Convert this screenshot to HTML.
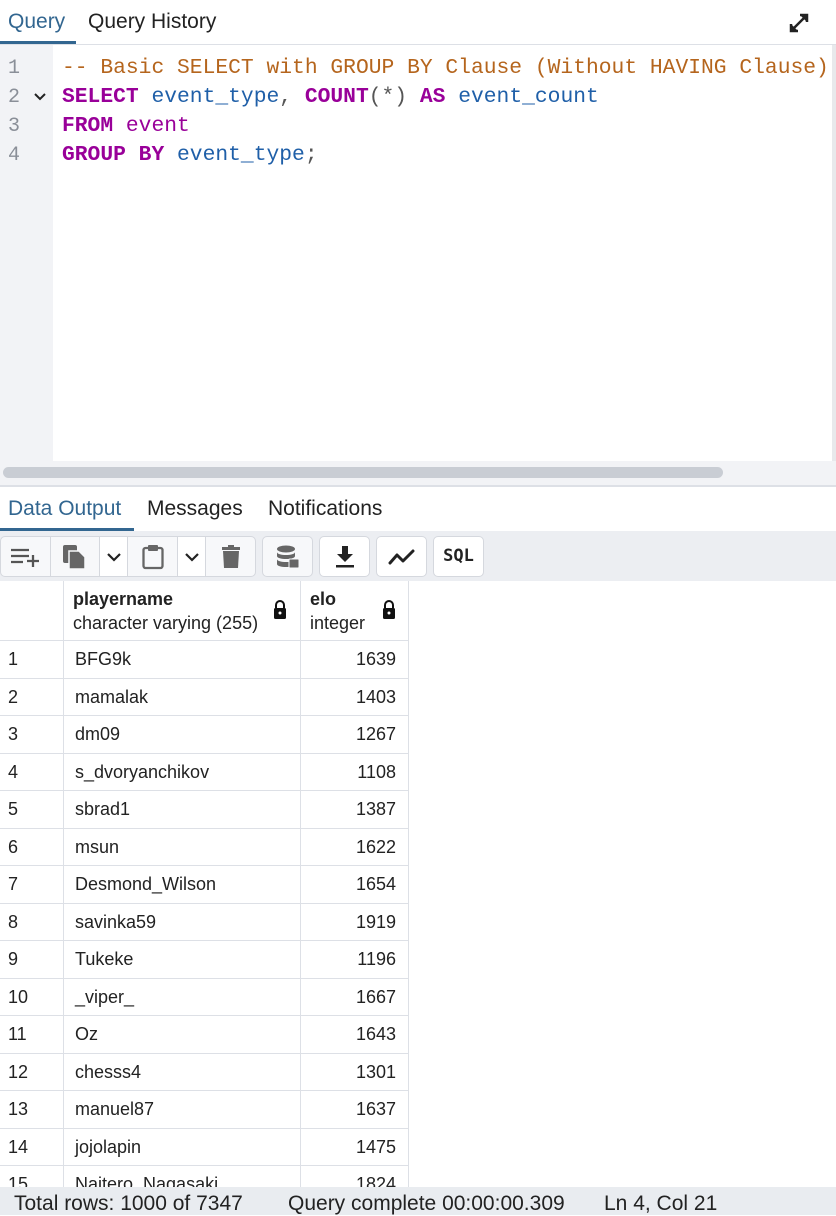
<!DOCTYPE html>
<html><head><meta charset="utf-8"><style>
*{box-sizing:border-box;margin:0;padding:0}
body{width:836px;height:1215px;overflow:hidden;background:#fff;font-family:"Liberation Sans",sans-serif;position:relative;color:#222}
.abs{position:absolute}
.tab{position:absolute;font-size:21px;top:10px;color:#222}
.code{font-family:"Liberation Mono",monospace;font-size:21.3px;position:absolute;left:62px;white-space:pre;line-height:29px}
.ln{position:absolute;left:8px;font-family:"Liberation Mono",monospace;font-size:20px;color:#8a8f98;line-height:29px}
.k{color:#990099;font-weight:bold}.v{color:#1f5fa8}.c{color:#b5651d}.p{color:#555}
.btn{position:absolute;top:536px;height:41px;border:1px solid #d5d8de;border-radius:5px;background:#f7f8fa}
.row{position:absolute;left:0;width:409px;height:37.5px;border-bottom:1px solid #dde0e6;font-size:18px}
.row span{position:absolute;top:8px}
.st{position:absolute;top:1192px;font-size:21px;color:#222;white-space:nowrap}
</style></head><body>
<div class="tab" style="left:8px;color:#326690">Query</div>
<div class="tab" style="left:88px">Query History</div>
<div class="abs" style="left:0;top:41px;width:76px;height:3px;background:#326690"></div>
<div class="abs" style="left:0;top:44px;width:836px;height:1px;background:#dde0e6"></div>
<svg class="abs" style="left:788px;top:12px" width="22" height="22" viewBox="0 0 22 22"><path d="M3 19L19 3M12 3h7v7M3 12v7h7" stroke="#222" stroke-width="2.5" fill="none"/><path d="M12 3h7v7zM3 12v7h7z" fill="#222"/></svg>
<div class="abs" style="left:0;top:45px;width:53px;height:416px;background:#f2f3f6"></div>
<div class="abs" style="left:832px;top:45px;width:4px;height:440px;background:#e8e9ec"></div>
<div class="ln" style="top:54px">1<br>2<br>3<br>4</div>
<svg class="abs" style="left:34px;top:93px" width="12" height="8"><path d="M1 1l5 5 5-5" stroke="#222" stroke-width="2" fill="none"/></svg>
<div class="code" style="top:54px"><span class="c">-- Basic SELECT with GROUP BY Clause (Without HAVING Clause)</span>
<span class="k">SELECT</span> <span class="v">event_type</span><span class="p">,</span> <span class="k">COUNT</span><span class="p">(*)</span> <span class="k">AS</span> <span class="v">event_count</span>
<span class="k">FROM</span> <span class="k" style="font-weight:normal;color:#990099">event</span>
<span class="k">GROUP BY</span> <span class="v">event_type</span><span class="p">;</span></div>
<div class="abs" style="left:0;top:461px;width:836px;height:24px;background:#f2f3f6"></div>
<div class="abs" style="left:3px;top:467px;width:720px;height:11px;border-radius:6px;background:#c9cdd4"></div>
<div class="abs" style="left:0;top:485px;width:836px;height:2px;background:#dde0e6"></div>
<div class="tab" style="left:8px;top:497px;color:#326690">Data Output</div>
<div class="tab" style="left:147px;top:497px">Messages</div>
<div class="tab" style="left:268px;top:497px">Notifications</div>
<div class="abs" style="left:0;top:528px;width:134px;height:3px;background:#326690"></div>
<div class="abs" style="left:0;top:531px;width:836px;height:50px;background:#eceef2"></div>
<div class="btn" style="left:0;width:256px;overflow:hidden">
 <div class="abs" style="left:49px;top:0;width:1px;height:41px;background:#d5d8de"></div>
 <div class="abs" style="left:98px;top:0;width:29px;height:41px;background:#fff;border-left:1px solid #d5d8de;border-right:1px solid #d5d8de"><svg class="abs" style="left:7px;top:16px" width="14" height="9"><path d="M1 1l6 6 6-6" stroke="#222" stroke-width="2.2" fill="none"/></svg></div>
 <div class="abs" style="left:176px;top:0;width:29px;height:41px;background:#fff;border-left:1px solid #d5d8de;border-right:1px solid #d5d8de"><svg class="abs" style="left:7px;top:16px" width="14" height="9"><path d="M1 1l6 6 6-6" stroke="#222" stroke-width="2.2" fill="none"/></svg></div>
 <svg class="abs" style="left:10px;top:10px" width="30" height="20"><path d="M0 3h18M0 9h18M0 15h12M16 14h12M22 8v12" stroke="#555" stroke-width="2.3"/></svg>
 <svg class="abs" style="left:61px;top:7px" width="24" height="26"><rect x="1" y="1" width="14" height="18" rx="2" fill="#666"/><path d="M7 7h10l6 6v12H7z" fill="#666" stroke="#f7f8fa" stroke-width="1.5"/></svg>
 <svg class="abs" style="left:141px;top:7px" width="22" height="26"><rect x="1.5" y="4" width="19" height="20" rx="2" fill="none" stroke="#666" stroke-width="2.3"/><rect x="6" y="1" width="10" height="6" rx="1" fill="#666"/></svg>
 <svg class="abs" style="left:221px;top:8px" width="18" height="24"><rect x="0" y="2" width="18" height="3" fill="#666"/><rect x="6" y="0" width="6" height="3" fill="#666"/><path d="M1 6h16l-1 17H2z" fill="#666"/></svg>
</div>
<div class="btn" style="left:262px;width:51px"><svg class="abs" style="left:13px;top:8px" width="24" height="24"><ellipse cx="10" cy="4" rx="9" ry="3.5" fill="#666"/><path d="M1 7c0 4 18 4 18 0v4c0 4-18 4-18 0zM1 14c0 4 18 4 18 0v5c0 4-18 4-18 0z" fill="#666"/><rect x="13" y="14" width="10" height="9" rx="1" fill="#666" stroke="#f7f8fa"/></svg></div>
<div class="btn" style="left:319px;width:51px;background:#fff"><svg class="abs" style="left:14px;top:8px" width="22" height="24"><path d="M8 1h6v8h5l-8 8-8-8h5z" fill="#222"/><rect x="2" y="20" width="18" height="2.5" fill="#222"/></svg></div>
<div class="btn" style="left:376px;width:51px;background:#fff"><svg class="abs" style="left:11px;top:10px" width="28" height="20"><path d="M2 16l7-8 6 6 10-10" stroke="#222" stroke-width="3" fill="none" stroke-linejoin="round" stroke-linecap="round"/></svg></div>
<div class="btn" style="left:433px;width:51px;background:#fff;font-family:'DejaVu Sans Mono',monospace;font-weight:bold;font-size:17px;text-align:center;line-height:39px;color:#222">SQL</div>
<div class="abs" style="left:0;top:581px;width:409px;height:60px;border-bottom:1px solid #dde0e6;border-right:1px solid #dde0e6"></div>
<div class="abs" style="left:63px;top:581px;width:1px;height:606px;background:#dde0e6"></div>
<div class="abs" style="left:300px;top:581px;width:1px;height:606px;background:#dde0e6"></div>
<div class="abs" style="left:408px;top:581px;width:1px;height:606px;background:#dde0e6"></div>
<div class="abs" style="left:73px;top:589px;font-size:18px;font-weight:bold">playername</div>
<div class="abs" style="left:73px;top:613px;font-size:18px">character varying (255)</div>
<div class="abs" style="left:310px;top:589px;font-size:18px;font-weight:bold">elo</div>
<div class="abs" style="left:310px;top:613px;font-size:18px">integer</div>
<svg class="abs" style="left:273px;top:600px" width="14" height="20"><path d="M3 8V5a4 4 0 018 0v3" stroke="#111" stroke-width="2" fill="none"/><rect x="1" y="8" width="12" height="11" rx="1.5" fill="#111"/><circle cx="7" cy="13" r="1.5" fill="#fff"/></svg>
<svg class="abs" style="left:382px;top:600px" width="14" height="20"><path d="M3 8V5a4 4 0 018 0v3" stroke="#111" stroke-width="2" fill="none"/><rect x="1" y="8" width="12" height="11" rx="1.5" fill="#111"/><circle cx="7" cy="13" r="1.5" fill="#fff"/></svg>
<div class="row" style="top:641px"><span style="left:8px">1</span><span style="left:75px">BFG9k</span><span style="right:13px">1639</span></div>
<div class="row" style="top:678.5px"><span style="left:8px">2</span><span style="left:75px">mamalak</span><span style="right:13px">1403</span></div>
<div class="row" style="top:716px"><span style="left:8px">3</span><span style="left:75px">dm09</span><span style="right:13px">1267</span></div>
<div class="row" style="top:753.5px"><span style="left:8px">4</span><span style="left:75px">s_dvoryanchikov</span><span style="right:13px">1108</span></div>
<div class="row" style="top:791px"><span style="left:8px">5</span><span style="left:75px">sbrad1</span><span style="right:13px">1387</span></div>
<div class="row" style="top:828.5px"><span style="left:8px">6</span><span style="left:75px">msun</span><span style="right:13px">1622</span></div>
<div class="row" style="top:866px"><span style="left:8px">7</span><span style="left:75px">Desmond_Wilson</span><span style="right:13px">1654</span></div>
<div class="row" style="top:903.5px"><span style="left:8px">8</span><span style="left:75px">savinka59</span><span style="right:13px">1919</span></div>
<div class="row" style="top:941px"><span style="left:8px">9</span><span style="left:75px">Tukeke</span><span style="right:13px">1196</span></div>
<div class="row" style="top:978.5px"><span style="left:8px">10</span><span style="left:75px">_viper_</span><span style="right:13px">1667</span></div>
<div class="row" style="top:1016px"><span style="left:8px">11</span><span style="left:75px">Oz</span><span style="right:13px">1643</span></div>
<div class="row" style="top:1053.5px"><span style="left:8px">12</span><span style="left:75px">chesss4</span><span style="right:13px">1301</span></div>
<div class="row" style="top:1091px"><span style="left:8px">13</span><span style="left:75px">manuel87</span><span style="right:13px">1637</span></div>
<div class="row" style="top:1128.5px"><span style="left:8px">14</span><span style="left:75px">jojolapin</span><span style="right:13px">1475</span></div>
<div class="row" style="top:1166px"><span style="left:8px">15</span><span style="left:75px">Naitero_Nagasaki</span><span style="right:13px">1824</span></div>
<div class="abs" style="left:0;top:1187px;width:836px;height:28px;background:#e9ecf0"></div>
<div class="st" style="left:14px">Total rows: 1000 of 7347</div>
<div class="st" style="left:288px">Query complete 00:00:00.309</div>
<div class="st" style="left:604px">Ln 4, Col 21</div>
</body></html>
